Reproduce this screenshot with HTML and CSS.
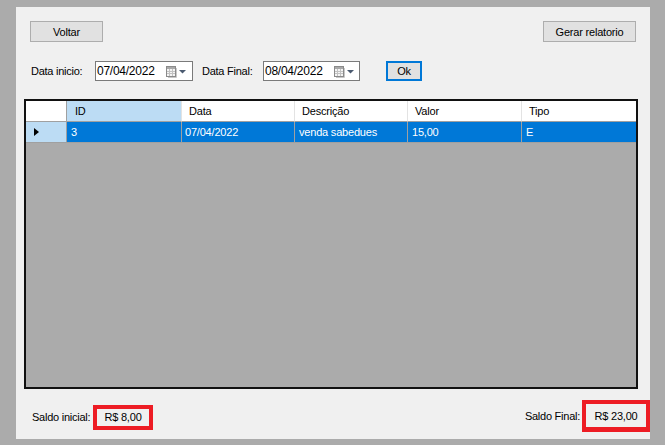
FILE: index.html
```html
<!DOCTYPE html>
<html>
<head>
<meta charset="utf-8">
<link rel="stylesheet" href="styles.css">
</head>
<body>
<div class="panel">
  <div class="topbar">
    <button class="btn btn-voltar">Voltar</button>
    <button class="btn btn-gerar">Gerar relatorio</button>
  </div>
  <div class="daterow">
    <span class="lbl lbl-ini">Data inicio:</span>
    <div class="datebox"><span class="dtext">07/04/2022</span>
      <svg class="cal" width="22" height="14" viewBox="0 0 22 14">
        <rect x="0.5" y="1.5" width="9" height="10" fill="#f4f4f4" stroke="#8a8a8a"/>
        <rect x="1" y="2" width="8" height="2" fill="#a9a9a9"/>
        <path d="M1 6.5h8M1 8.5h8M3.5 4v7M6.5 4v7" stroke="#c2c2c2" stroke-width="1"/>
        <path d="M2 12.5h8.5V3" stroke="#c8c8c8" fill="none"/>
        <path d="M13 5h7l-3.5 3.5z" fill="#4b5a70"/>
      </svg>
    </div>
    <span class="lbl lbl-fin">Data Final:</span>
    <div class="datebox datebox2"><span class="dtext">08/04/2022</span>
      <svg class="cal" width="22" height="14" viewBox="0 0 22 14">
        <rect x="0.5" y="1.5" width="9" height="10" fill="#f4f4f4" stroke="#8a8a8a"/>
        <rect x="1" y="2" width="8" height="2" fill="#a9a9a9"/>
        <path d="M1 6.5h8M1 8.5h8M3.5 4v7M6.5 4v7" stroke="#c2c2c2" stroke-width="1"/>
        <path d="M2 12.5h8.5V3" stroke="#c8c8c8" fill="none"/>
        <path d="M13 5h7l-3.5 3.5z" fill="#4b5a70"/>
      </svg>
    </div>
    <button class="btn btn-ok">Ok</button>
  </div>
  <div class="grid">
    <div class="row head">
      <div class="cell rh"></div>
      <div class="cell c1 hsel">ID</div>
      <div class="cell c2">Data</div>
      <div class="cell c3">Descrição</div>
      <div class="cell c4">Valor</div>
      <div class="cell c5">Tipo</div>
    </div>
    <div class="row data sel">
      <div class="cell rh"><span class="tri"></span></div>
      <div class="cell c1">3</div>
      <div class="cell c2">07/04/2022</div>
      <div class="cell c3">venda sabedues</div>
      <div class="cell c4">15,00</div>
      <div class="cell c5">E</div>
    </div>
  </div>
  <div class="bottom">
    <div class="saldo saldo-ini">
      <span class="lbl lbl-sini">Saldo inicial:</span>
      <span class="val val-ini">R$ 8,00</span>
    </div>
    <div class="saldo saldo-fin">
      <span class="lbl lbl-sfin">Saldo Final:</span>
      <span class="val val-fin">R$ 23,00</span>
    </div>
  </div>
</div>
</body>
</html>
```
FILE: styles.css
```css
html, body {
  margin: 0;
  padding: 0;
}
body {
  background: #ababab;
  padding-top: 7px;
  width: 665px;
  height: 438px;
  overflow: hidden;
  font-family: "Liberation Sans", Arial, sans-serif;
  font-size: 11px;
  color: #000;
}
.panel {
  margin-left: 16px;
  width: 634px;
  height: 432px;
  background: #f0f0f0;
  display: flex;
  flex-direction: column;
}
.topbar {
  display: flex;
  justify-content: space-between;
  padding: 14px 14px 0 14px;
}
.btn {
  box-sizing: border-box;
  height: 21px;
  background: #e1e1e1;
  border: 1px solid #adadad;
  font-family: "Liberation Sans", Arial, sans-serif;
  font-size: 11px;
  letter-spacing: -0.2px;
  color: #000;
  padding: 0;
  margin: 0;
}
.btn-voltar { width: 73px; }
.btn-gerar { width: 93px; }
.daterow {
  display: flex;
  align-items: center;
  margin-top: 19px;
  height: 20px;
  padding-left: 15px;
}
.lbl {
  letter-spacing: -0.25px;
  color: #000;
  white-space: nowrap;
}
.lbl-ini { width: 64px; }
.lbl-fin { width: 61px; margin-left: 9px; }
.datebox {
  box-sizing: border-box;
  width: 98px;
  height: 20px;
  border: 1px solid #7a7a7a;
  background: #fff;
  display: flex;
  align-items: center;
  padding-left: 1px;
}
.datebox2 { width: 97px; }
.dtext {
  font-size: 12px;
  letter-spacing: -0.25px;
  width: 69px;
}
.cal { display: block; margin-top: 1px; }
.btn-ok {
  width: 36px;
  height: 20px;
  margin-left: 26px;
  border: 2px solid #0078d7;
}
.grid {
  box-sizing: border-box;
  margin: 18px 0 0 8px;
  width: 614px;
  height: 290px;
  border: 2px solid #111;
  background: #ababab;
}
.row {
  display: flex;
  height: 21px;
}
.cell {
  box-sizing: border-box;
  height: 21px;
  border-right: 1px solid #a0a0a0;
  border-bottom: 1px solid #a0a0a0;
  display: flex;
  align-items: center;
  white-space: nowrap;
  overflow: hidden;
}
.rh { width: 41px; }
.c1 { width: 115px; }
.c2 { width: 113px; }
.c3 { width: 113px; }
.c4 { width: 114px; }
.c5 { width: 114px; border-right: none; }
.head .cell {
  background: #fff;
  padding-left: 7px;
  letter-spacing: -0.2px;
  border-right-color: #e3e3e3;
}
.head .rh { border-right-color: #a0a0a0; }
.head .c1 { padding-left: 8px; }
.head .hsel { background: #bcdcf4; }
.data .cell {
  background: #0078d7;
  color: #fff;
  padding-left: 4px;
  letter-spacing: -0.2px;
}
.data .c2 { padding-left: 3px; }
.data .rh {
  background: #bcdcf4;
  padding-left: 8px;
}
.tri {
  width: 0;
  height: 0;
  border-top: 4.5px solid transparent;
  border-bottom: 4.5px solid transparent;
  border-left: 5px solid #000;
}
.bottom {
  display: flex;
  justify-content: space-between;
  margin-top: 11px;
}
.saldo {
  display: flex;
  align-items: center;
}
.saldo-ini {
  padding-left: 16px;
  margin-top: 2px;
}
.lbl-sini { width: 61px; }
.lbl-sfin { margin-right: 2px; }
.val {
  box-sizing: border-box;
  border: 4px solid #ed1c24;
  display: flex;
  align-items: center;
  justify-content: center;
  letter-spacing: -0.2px;
}
.val-ini { width: 60px; height: 25px; }
.val-fin { width: 68px; height: 32px; border-width: 4px 4px 5px 4px; }
```
